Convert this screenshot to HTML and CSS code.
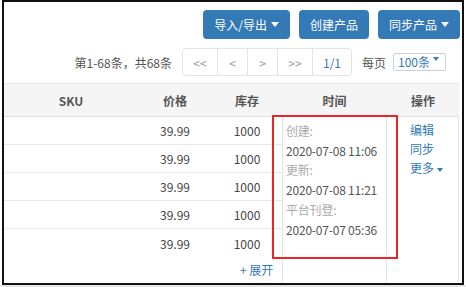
FILE: index.html
```html
<!DOCTYPE html>
<html>
<head>
    <meta charset="utf-8">
    <title>产品列表</title>
    <link rel="stylesheet" href="styles.css">
</head>
<body>
<div class="page">
    <div class="frame">
        <div class="toolbar">
            <a class="btn">导入/导出 <span class="caret"></span></a>
            <a class="btn">创建产品</a>
            <a class="btn">同步产品 <span class="caret"></span></a>
        </div>

        <div class="pager">
            <span class="pager-info">第1-68条，共68条</span>
            <div class="pager-links">
                <a class="pl w34">&lt;&lt;</a>
                <a class="pl w30">&lt;</a>
                <a class="pl w30">&gt;</a>
                <a class="pl w35">&gt;&gt;</a>
                <a class="pl w39 current">1/1</a>
            </div>
            <span class="per-page">每页</span>
            <span class="page-size">100条 <span class="size-caret"></span></span>
        </div>

        <div class="list">
            <div class="thead">
                <div class="th">SKU</div>
                <div class="th">价格</div>
                <div class="th">库存</div>
                <div class="th">时间</div>
                <div class="th">操作</div>
            </div>
            <div class="tbody">
                <div class="rows">
                    <div class="tr"><div class="td"></div><div class="td">39.99</div><div class="td">1000</div></div>
                    <div class="tr"><div class="td"></div><div class="td">39.99</div><div class="td">1000</div></div>
                    <div class="tr"><div class="td"></div><div class="td">39.99</div><div class="td">1000</div></div>
                    <div class="tr"><div class="td"></div><div class="td">39.99</div><div class="td">1000</div></div>
                    <div class="tr last"><div class="td"></div><div class="td">39.99</div><div class="td">1000</div></div>
                    <div class="tr more"><div class="td"></div><div class="td"></div><div class="td expand-cell"><a class="expand">+ 展开</a></div></div>
                </div>
                <div class="time-cell">
                    <div class="label">创建:</div>
                    <div class="stamp">2020-07-08 11:06</div>
                    <div class="label">更新:</div>
                    <div class="stamp">2020-07-08 11:21</div>
                    <div class="label">平台刊登:</div>
                    <div class="stamp">2020-07-07 05:36</div>
                </div>
                <div class="act-cell">
                    <a class="act">编辑</a>
                    <a class="act">同步</a>
                    <a class="act">更多 <span class="act-caret"></span></a>
                </div>
            </div>
        </div>

        <div class="mark"></div>
    </div>
</div>
</body>
</html>
```

FILE: styles.css
```css
html, body {
    margin: 0;
    padding: 0;
}

body {
    background: #e6e6e6;
    font-family: "Noto Sans CJK SC", "Liberation Sans", sans-serif;
    font-size: 12px;
    color: #555;
}

.page {
    background: #fff;
    padding-left: 2px;
    width: 464px;
    height: 285px;
}

.frame {
    position: relative;
    box-sizing: border-box;
    width: 462px;
    height: 285px;
    border: 2px solid #111;
    overflow: hidden;
}

/* top buttons */
.toolbar {
    display: flex;
    justify-content: flex-end;
    gap: 9px;
    padding: 8px 2px 0 0;
}

.btn {
    display: flex;
    align-items: center;
    gap: 4px;
    height: 29px;
    padding: 0 11px;
    background: #337ab7;
    color: #fff;
    border-radius: 4px;
    line-height: 1;
}

.caret {
    width: 0;
    height: 0;
    border-left: 4px solid transparent;
    border-right: 4px solid transparent;
    border-top: 5px solid #fff;
}

/* pagination */
.pager {
    display: flex;
    align-items: center;
    justify-content: flex-end;
    height: 28px;
    margin-top: 9px;
    padding-right: 16px;
}

.pager-info {
    margin-right: 10px;
}

.pager-links {
    display: flex;
    height: 28px;
    border: 1px solid #e3e3e3;
    border-radius: 4px;
    box-sizing: border-box;
}

.pl {
    display: flex;
    align-items: center;
    justify-content: center;
    color: #999;
    border-left: 1px solid #e3e3e3;
    box-sizing: border-box;
}

.pl:first-child {
    border-left: none;
}

.w30 { width: 30px; }
.w34 { width: 34px; }
.w35 { width: 35px; }
.w39 { width: 39px; }

.pl.current {
    color: #337ab7;
}

.per-page {
    margin-left: 10px;
    margin-right: 7px;
}

.page-size {
    position: relative;
    box-sizing: border-box;
    width: 53px;
    height: 18px;
    padding-left: 4px;
    border: 1px solid #c5d3e0;
    border-radius: 2px;
    color: #337ab7;
    line-height: 16px;
    font-size: 12px;
}

.size-caret {
    position: absolute;
    right: 6px;
    top: 3px;
    border-left: 3px solid transparent;
    border-right: 3px solid transparent;
    border-top: 4px solid #337ab7;
}

/* table */
.list {
    margin-top: 7px;
    width: 455px;
}

.thead {
    display: grid;
    grid-template-columns: 134px 74px 70px 105px 72px;
    height: 34px;
    background: #f5f5f5;
    border-top: 1px solid #e6e6e6;
    border-bottom: 1px solid #dedede;
    box-sizing: border-box;
}

.th {
    display: flex;
    align-items: center;
    justify-content: center;
    font-weight: bold;
    color: #555;
}

.tbody {
    display: grid;
    grid-template-columns: 278px 105px 72px;
    height: 165px;
    border-right: 1px solid #e6e6e6;
}

.tr {
    display: grid;
    grid-template-columns: 134px 74px 70px;
    height: 28px;
    border-bottom: 1px solid #e8e8e8;
    box-sizing: border-box;
}

.tr.last,
.tr.more {
    border-bottom: none;
}

.tr.more {
    height: 25px;
}

.td {
    display: flex;
    align-items: center;
    justify-content: center;
    color: #444;
}

.td.expand-cell {
    justify-content: flex-start;
    padding-left: 28px;
}

.expand {
    color: #337ab7;
    white-space: nowrap;
}

.time-cell {
    border-left: 1px solid #e3e3e3;
    border-right: 1px solid #e3e3e3;
    padding: 4px 0 0 3px;
    line-height: 19.7px;
    letter-spacing: -0.2px;
}

.label {
    color: #aaa;
}

.stamp {
    color: #555;
}

.act-cell {
    display: flex;
    flex-direction: column;
    padding: 3px 0 0 23px;
    line-height: 19px;
}

.act {
    color: #337ab7;
}

.act-caret {
    display: inline-block;
    vertical-align: middle;
    border-left: 3px solid transparent;
    border-right: 3px solid transparent;
    border-top: 4px solid #337ab7;
}

/* annotation box */
.mark {
    position: absolute;
    left: 268px;
    top: 113px;
    width: 126px;
    height: 144px;
    box-sizing: border-box;
    border: 2px solid #e8262a;
}
```
